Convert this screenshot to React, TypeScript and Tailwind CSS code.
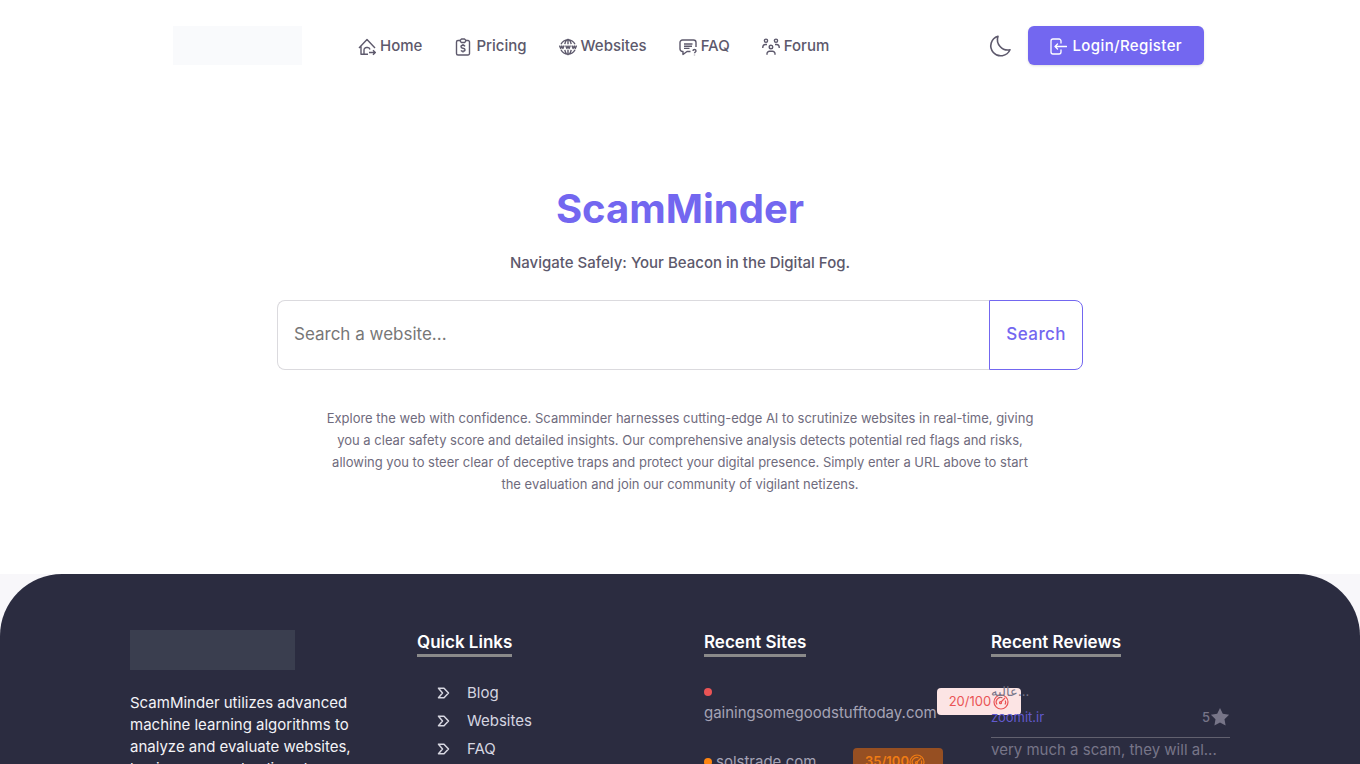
import React from "react";

const navItems = [
  { title: "Home", icon: "home" },
  { title: "Pricing", icon: "pricing" },
  { title: "Websites", icon: "websites" },
  { title: "FAQ", icon: "faq" },
  { title: "Forum", icon: "forum" },
];

const quickLinks = ["Blog", "Websites", "FAQ"];

const icons: Record<string, React.ReactNode> = {
  home: (
    <>
      <path d="M3 8.500V16.300h3v-4.300A2.500 2.500 0 0 1 8.500 9.500h1A2.500 2.500 0 0 1 12 11.500M6 16.300h4M1 10 9 1.500 17 10" />
      <path d="M11 14.500h6M15 12.200l2.300 2.300L15 16.800" />
    </>
  ),
  pricing: (
    <>
      <path d="M6 2.500H4A1.500 1.500 0 0 0 2.500 4v11.500A1.500 1.500 0 0 0 4 17h10a1.500 1.500 0 0 0 1.500-1.500V4A1.500 1.500 0 0 0 14 2.500h-2" />
      <path d="M6 2.500 7.500 1h3L12 2.500 10.800 4.500H7.200ZM11 8.300c-.4-.7-1-1-2-1-1.200 0-2 .6-2 1.500 0 2.200 4 .8 4 3 0 .9-.8 1.500-2 1.500-1 0-1.600-.3-2-1M9 6v1.300M9 13.300v1.300" />
    </>
  ),
  websites: (
    <>
      <path d="M2 6.200a7.800 7.800 0 0 1 14 0M2 11.800a7.800 7.800 0 0 0 14 0M5.800 6.200C6.400 3.500 7.500 1.500 9 1.500s2.600 2 3.200 4.700M5.800 11.800C6.400 14.500 7.500 16.500 9 16.500s2.600-2 3.200-4.700M9 1.500v4.700M9 11.800v4.700" />
      <path d="m.5 7.500 1.200 3 1.100-2.500 1.100 2.500 1.200-3M6.700 7.500l1.200 3L9 8l1.100 2.500 1.200-3M12.900 7.500l1.200 3 1.100-2.500 1.100 2.500 1.200-3" />
    </>
  ),
  faq: (
    <>
      <path d="M17 9V4.500A2.500 2.500 0 0 0 14.500 2h-11A2.500 2.500 0 0 0 1 4.500V11a2.500 2.500 0 0 0 2.500 2.500H4V16.500L8 13.500h3.500" />
      <path d="M5 6h8.500M5 8.200h8M5 10.400h5.500M14 13c0-1 .6-1.500 1.500-1.500S17 12 17 12.900c0 1-1.500 1.100-1.500 2.300M15.500 16.700v.6" />
    </>
  ),
  forum: (
    <>
      <circle cx="4" cy="2.700" r="1.600" />
      <circle cx="14" cy="2.700" r="1.600" />
      <circle cx="9" cy="9" r="1.800" />
      <path d="M.8 10V8.800A2.600 2.600 0 0 1 3.400 6.500H5M17.200 10V8.800a2.600 2.600 0 0 0-2.600-2.300H13M5 16.800v-1a2.500 2.500 0 0 1 2.500-2.500h3a2.500 2.500 0 0 1 2.500 2.500v1" />
    </>
  ),
};

const Gauge = () => (
  <svg className="size-4" viewBox="0 0 16 16" fill="none" stroke="currentColor" strokeWidth="1.200">
    <circle cx="8" cy="8" r="7" />
    <path d="M4 10.500A4.500 4.500 0 0 1 9.500 3.800M12.300 6.500a4.500 4.500 0 0 1-.3 4M8 8 12 4" />
    <circle cx="7.500" cy="8.700" r="1" />
  </svg>
);

const FooterTitle = ({ title }: { title: string }) => (
  <h2 className="w-fit border-b-3 border-[#8a8a8a] text-[17px] leading-6 font-semibold text-white">{title}</h2>
);

const Header = () => (
  <header className="mx-auto flex w-full max-w-[1048px] items-center pt-[26px] pl-[17px]">
    <div className="h-[39px] w-[129px] bg-[#f9fafc]" />
    <nav className="ml-14 flex items-center gap-8">
      {navItems.map((item) => (
        <a key={item.title} href="#" className="flex items-center gap-1 text-[15px] leading-6 font-medium">
          <svg className="mt-0.5 size-[18px]" viewBox="0 0 18 18" fill="none" stroke="currentColor" strokeWidth="1.400" strokeLinejoin="round">
            {icons[item.icon]}
          </svg>
          {item.title}
        </a>
      ))}
    </nav>
    <button aria-label="Dark mode" className="ml-auto">
      <svg className="size-6" viewBox="0 0 24 24" fill="none" stroke="currentColor" strokeWidth="1.600" strokeLinejoin="round">
        <path d="M10 2.200A10 10 0 1 0 22 15.800 10.500 10.500 0 0 1 10 2.200Z" />
      </svg>
    </button>
    <button className="ml-4 flex h-[39px] items-center gap-1.5 rounded-md bg-[#7367f0] px-[22px] pt-0.5 text-[15px] font-medium tracking-wide text-white shadow-sm">
      <svg className="size-[17px]" viewBox="0 0 17 17" fill="none" stroke="currentColor" strokeWidth="1.300" strokeLinecap="round" strokeLinejoin="round">
        <path d="M11 5V3a2 2 0 0 0-2-2H3a2 2 0 0 0-2 2v11a2 2 0 0 0 2 2h6a2 2 0 0 0 2-2v-2M16.500 8.500H5M7.500 6 5 8.500 7.500 11" />
      </svg>
      Login/Register
    </button>
  </header>
);

const Hero = () => (
  <main className="flex flex-col items-center px-6 pt-[117px] pb-[79px] text-center">
    <h1 className="text-[40px] leading-[54px] font-bold text-[#7367f0]">ScamMinder</h1>
    <p className="mt-[15px] text-[15px] leading-6 font-medium">Navigate Safely: Your Beacon in the Digital Fog.</p>
    <form className="mt-[25px] flex h-[70px] w-full max-w-[806px]" onSubmit={(e) => e.preventDefault()}>
      <input
        type="text"
        aria-label="Search a website"
        placeholder="Search a website..."
        className="min-w-0 flex-1 rounded-l-lg border border-r-0 border-[#dbdade] px-4 text-[17px] outline-none placeholder:text-[#777]"
      />
      <button className="rounded-r-lg border border-[#7367f0] px-4 text-[17px] font-medium tracking-wide text-[#7367f0]">Search</button>
    </form>
    <p className="mt-[37px] w-full max-w-[710px] text-[13px] leading-[22px] text-[#6f6b7d]">
      Explore the web with confidence. Scamminder harnesses cutting-edge AI to scrutinize websites in real-time, giving
      you a clear safety score and detailed insights. Our comprehensive analysis detects potential red flags and risks,
      allowing you to steer clear of deceptive traps and protect your digital presence. Simply enter a URL above to start
      the evaluation and join our community of vigilant netizens.
    </p>
  </main>
);

const Footer = () => (
  <div className="bg-[#f8f7fa]">
    <footer className="rounded-t-[62px] bg-[#2b2c40] pt-14 pb-6">
      <div className="mx-auto grid w-full max-w-[1148px] grid-cols-4">
        <div className="px-6">
          <div className="h-10 w-[165px] bg-[#3a3e4f]" />
          <p className="mt-[22px] text-[15px] leading-[22px] text-[#f3f3f7]">
            ScamMinder utilizes advanced machine learning algorithms to analyze and evaluate websites, businesses, and
            online shops.
          </p>
        </div>

        <div className="px-6">
          <FooterTitle title="Quick Links" />
          <ul className="mt-6 pl-5">
            {quickLinks.map((link) => (
              <li key={link} className="mb-1">
                <a href="#" className="flex items-center gap-4 text-[15px] leading-6 text-[#d6d6e0]">
                  <svg className="size-[14px]" viewBox="0 0 14 14" fill="none" stroke="currentColor" strokeWidth="1.500" strokeLinejoin="round">
                    <path d="M1.500 2.200H7L11.500 7 7 11.800H1.500L5.500 7Z" />
                  </svg>
                  {link}
                </a>
              </li>
            ))}
          </ul>
        </div>

        <div className="px-6">
          <FooterTitle title="Recent Sites" />
          <div className="mt-[31px] flex items-start">
            <a href="#" className="text-[15px] leading-[22px] text-[#a5a3b5]">
              <span className="block size-2 rounded-full bg-[#ea5455]" />
              <span className="mt-1.5 block">gainingsomegoodstufftoday.com</span>
            </a>
            <span className="flex h-[27px] w-[84px] shrink-0 items-center gap-0.5 rounded-sm bg-[#fce4e4] pl-3 text-[13px] text-[#ea5455]">
              20/100
              <Gauge />
            </span>
          </div>
          <div className="mt-6 flex items-center justify-between">
            <a href="#" className="flex items-center gap-1 text-[15px] leading-[22px] text-[#a5a3b5]">
              <span className="size-2 rounded-full bg-[#ff8510]" />
              solstrade.com
            </a>
            <span className="flex h-[27px] w-[90px] items-center rounded-sm bg-[#964f22] pl-3 text-[13px] font-semibold text-[#f07c14]">
              35/100
              <Gauge />
            </span>
          </div>
        </div>

        <div className="relative px-6">
          <FooterTitle title="Recent Reviews" />
          <p className="mt-6 text-[13px] leading-5 text-[#777588]">
            <bdi>عالیه</bdi>...
          </p>
          <div className="mt-1 flex items-center justify-between text-[13px] leading-6">
            <a href="#" className="text-[#6259ce]">zoomit.ir</a>
            <span className="flex items-center font-medium text-[#777588]">
              5
              <svg className="size-5" viewBox="0 0 20 20" fill="currentColor">
                <path d="m10 1 2.800 5.800 6.300.9-4.600 4.500 1.100 6.400L10 15.600l-5.600 3 1.100-6.400L.9 7.700l6.300-.9Z" />
              </svg>
            </span>
          </div>
          <hr className="mt-2 border-[#62616f]" />
          <p className="truncate text-[15px] leading-6 text-[#777588]">very much a scam, they will al...</p>
        </div>
      </div>
    </footer>
  </div>
);

export default function App() {
  return (
    <div className="min-h-dvh bg-white font-['Inter','Noto_Sans',sans-serif] text-[#5d596c]">
      <Header />
      <Hero />
      <Footer />
    </div>
  );
}
